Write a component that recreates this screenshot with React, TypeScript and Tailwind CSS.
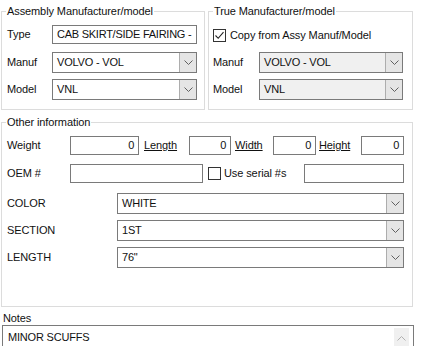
import React from 'react';

function Chevron({ up = false, color = '#606060' }: { up?: boolean; color?: string }) {
  return (
    <svg width="9" height="5" viewBox="0 0 9 5" className="block">
      <path d={up ? 'M0.5 4.5 L4.5 0.5 L8.5 4.5' : 'M0.5 0.5 L4.5 4.5 L8.5 0.5'} fill="none" stroke={color} strokeWidth="1" />
    </svg>
  );
}

function TextBox({ value = '', className = '', right = false }: { value?: string; className?: string; right?: boolean }) {
  return (
    <div
      className={`h-[19px] border border-[#7a7a7a] bg-white flex items-center px-[4px] whitespace-nowrap overflow-hidden tracking-[-0.25px] ${
        right ? 'justify-end' : ''
      } ${className}`}
    >
      {value}
    </div>
  );
}

function Combo({ value, className = '', disabled = false }: { value: string; className?: string; disabled?: boolean }) {
  return (
    <div className={`h-[21px] border border-[#7a7a7a] flex ${disabled ? 'bg-[#f0f0f0]' : 'bg-white'} ${className}`}>
      <div className="flex-1 flex items-center pl-[4px] whitespace-nowrap overflow-hidden tracking-[-0.2px]">{value}</div>
      <div className="w-[17px] border-l border-[#adadad] bg-[#e5e5e5] flex items-center justify-center">
        <Chevron />
      </div>
    </div>
  );
}

function CheckBox({ checked = false }: { checked?: boolean }) {
  return (
    <div className="w-[13px] h-[13px] border border-[#333333] bg-white flex items-center justify-center shrink-0">
      {checked && (
        <svg width="11" height="11" viewBox="0 0 11 11" className="block">
          <path d="M1.5 5.5 L4.2 8.3 L9.5 2.2" fill="none" stroke="#222" strokeWidth="1.1" />
        </svg>
      )}
    </div>
  );
}

export default function App() {
  return (
    <div className="w-[421px] h-[346px] overflow-hidden bg-white text-[#111111] text-[11px] leading-[13px] tracking-[-0.1px] font-['Liberation_Sans',Arial,sans-serif]">
      {/* Top groups */}
      <div className="flex pt-[5px]">
        <fieldset className="ml-[1px] w-[204px] h-[105px] border border-[#dcdcdc] p-0 m-0">
          <legend className="ml-[4px] px-[1px] leading-[13px]">Assembly Manufacturer/model</legend>
          <div className="mt-[7px] flex items-center h-[19px]">
            <span className="w-[50px] pl-[5px]">Type</span>
            <TextBox value="CAB SKIRT/SIDE FAIRING -" className="w-[145px]" />
          </div>
          <div className="mt-[8px] flex items-center h-[21px]">
            <span className="w-[50px] pl-[5px]">Manuf</span>
            <Combo value="VOLVO - VOL" className="w-[145px]" />
          </div>
          <div className="mt-[6px] flex items-center h-[21px]">
            <span className="w-[50px] pl-[5px]">Model</span>
            <Combo value="VNL" className="w-[145px]" />
          </div>
        </fieldset>

        <fieldset className="ml-[3px] w-[205px] h-[105px] border border-[#dcdcdc] p-0 m-0">
          <legend className="ml-[4px] px-[1px] leading-[13px]">True Manufacturer/model</legend>
          <div className="mt-[10px] flex items-center h-[14px] pl-[4px]">
            <CheckBox checked />
            <span className="pl-[4px]">Copy from Assy Manuf/Model</span>
          </div>
          <div className="mt-[10px] flex items-center h-[21px]">
            <span className="w-[50px] pl-[4px]">Manuf</span>
            <Combo value="VOLVO - VOL" className="w-[144px]" disabled />
          </div>
          <div className="mt-[6px] flex items-center h-[21px]">
            <span className="w-[50px] pl-[4px]">Model</span>
            <Combo value="VNL" className="w-[144px]" disabled />
          </div>
        </fieldset>
      </div>

      {/* Other information */}
      <fieldset className="mt-[6px] ml-[1px] w-[412px] h-[191px] border border-[#dcdcdc] p-0">
        <legend className="ml-[4px] px-[1px] leading-[13px]">Other information</legend>
        <div className="mt-[7px] flex items-center h-[19px]">
          <span className="w-[68px] pl-[5px]">Weight</span>
          <TextBox value="0" right className="w-[69px]" />
          <span className="w-[50px] pl-[5px] underline">Length</span>
          <TextBox value="0" right className="w-[42px]" />
          <span className="w-[42px] pl-[4px] underline">Width</span>
          <TextBox value="0" right className="w-[43px]" />
          <span className="w-[45px] pl-[3px] underline">Height</span>
          <TextBox value="0" right className="w-[43px]" />
        </div>
        <div className="mt-[9px] flex items-center h-[19px]">
          <span className="w-[68px] pl-[5px]">OEM #</span>
          <TextBox className="w-[133px]" />
          <div className="ml-[5px]">
            <CheckBox />
          </div>
          <span className="w-[83px] pl-[3px]">Use serial #s</span>
          <TextBox className="w-[100px]" />
        </div>
        <div className="mt-[10px] flex items-center h-[21px]">
          <span className="w-[115px] pl-[5px]">COLOR</span>
          <Combo value="WHITE" className="w-[287px]" />
        </div>
        <div className="mt-[6px] flex items-center h-[21px]">
          <span className="w-[115px] pl-[5px]">SECTION</span>
          <Combo value="1ST" className="w-[287px]" />
        </div>
        <div className="mt-[6px] flex items-center h-[21px]">
          <span className="w-[115px] pl-[5px]">LENGTH</span>
          <Combo value={'76"'} className="w-[287px]" />
        </div>
      </fieldset>

      {/* Notes */}
      <div className="mt-[5px] pl-[3px] h-[13px]">Notes</div>
      <div className="ml-[2px] w-[412px] h-[40px] border border-[#7a7a7a] flex">
        <div className="flex-1 pl-[5px] pt-[5px] tracking-[-0.2px]">MINOR SCUFFS</div>
        <div className="mt-[2px] mr-[4px] w-[15px] h-[20px] bg-[#f0f0f0] flex items-center justify-center">
          <Chevron up color="#b0b0b0" />
        </div>
      </div>
    </div>
  );
}
